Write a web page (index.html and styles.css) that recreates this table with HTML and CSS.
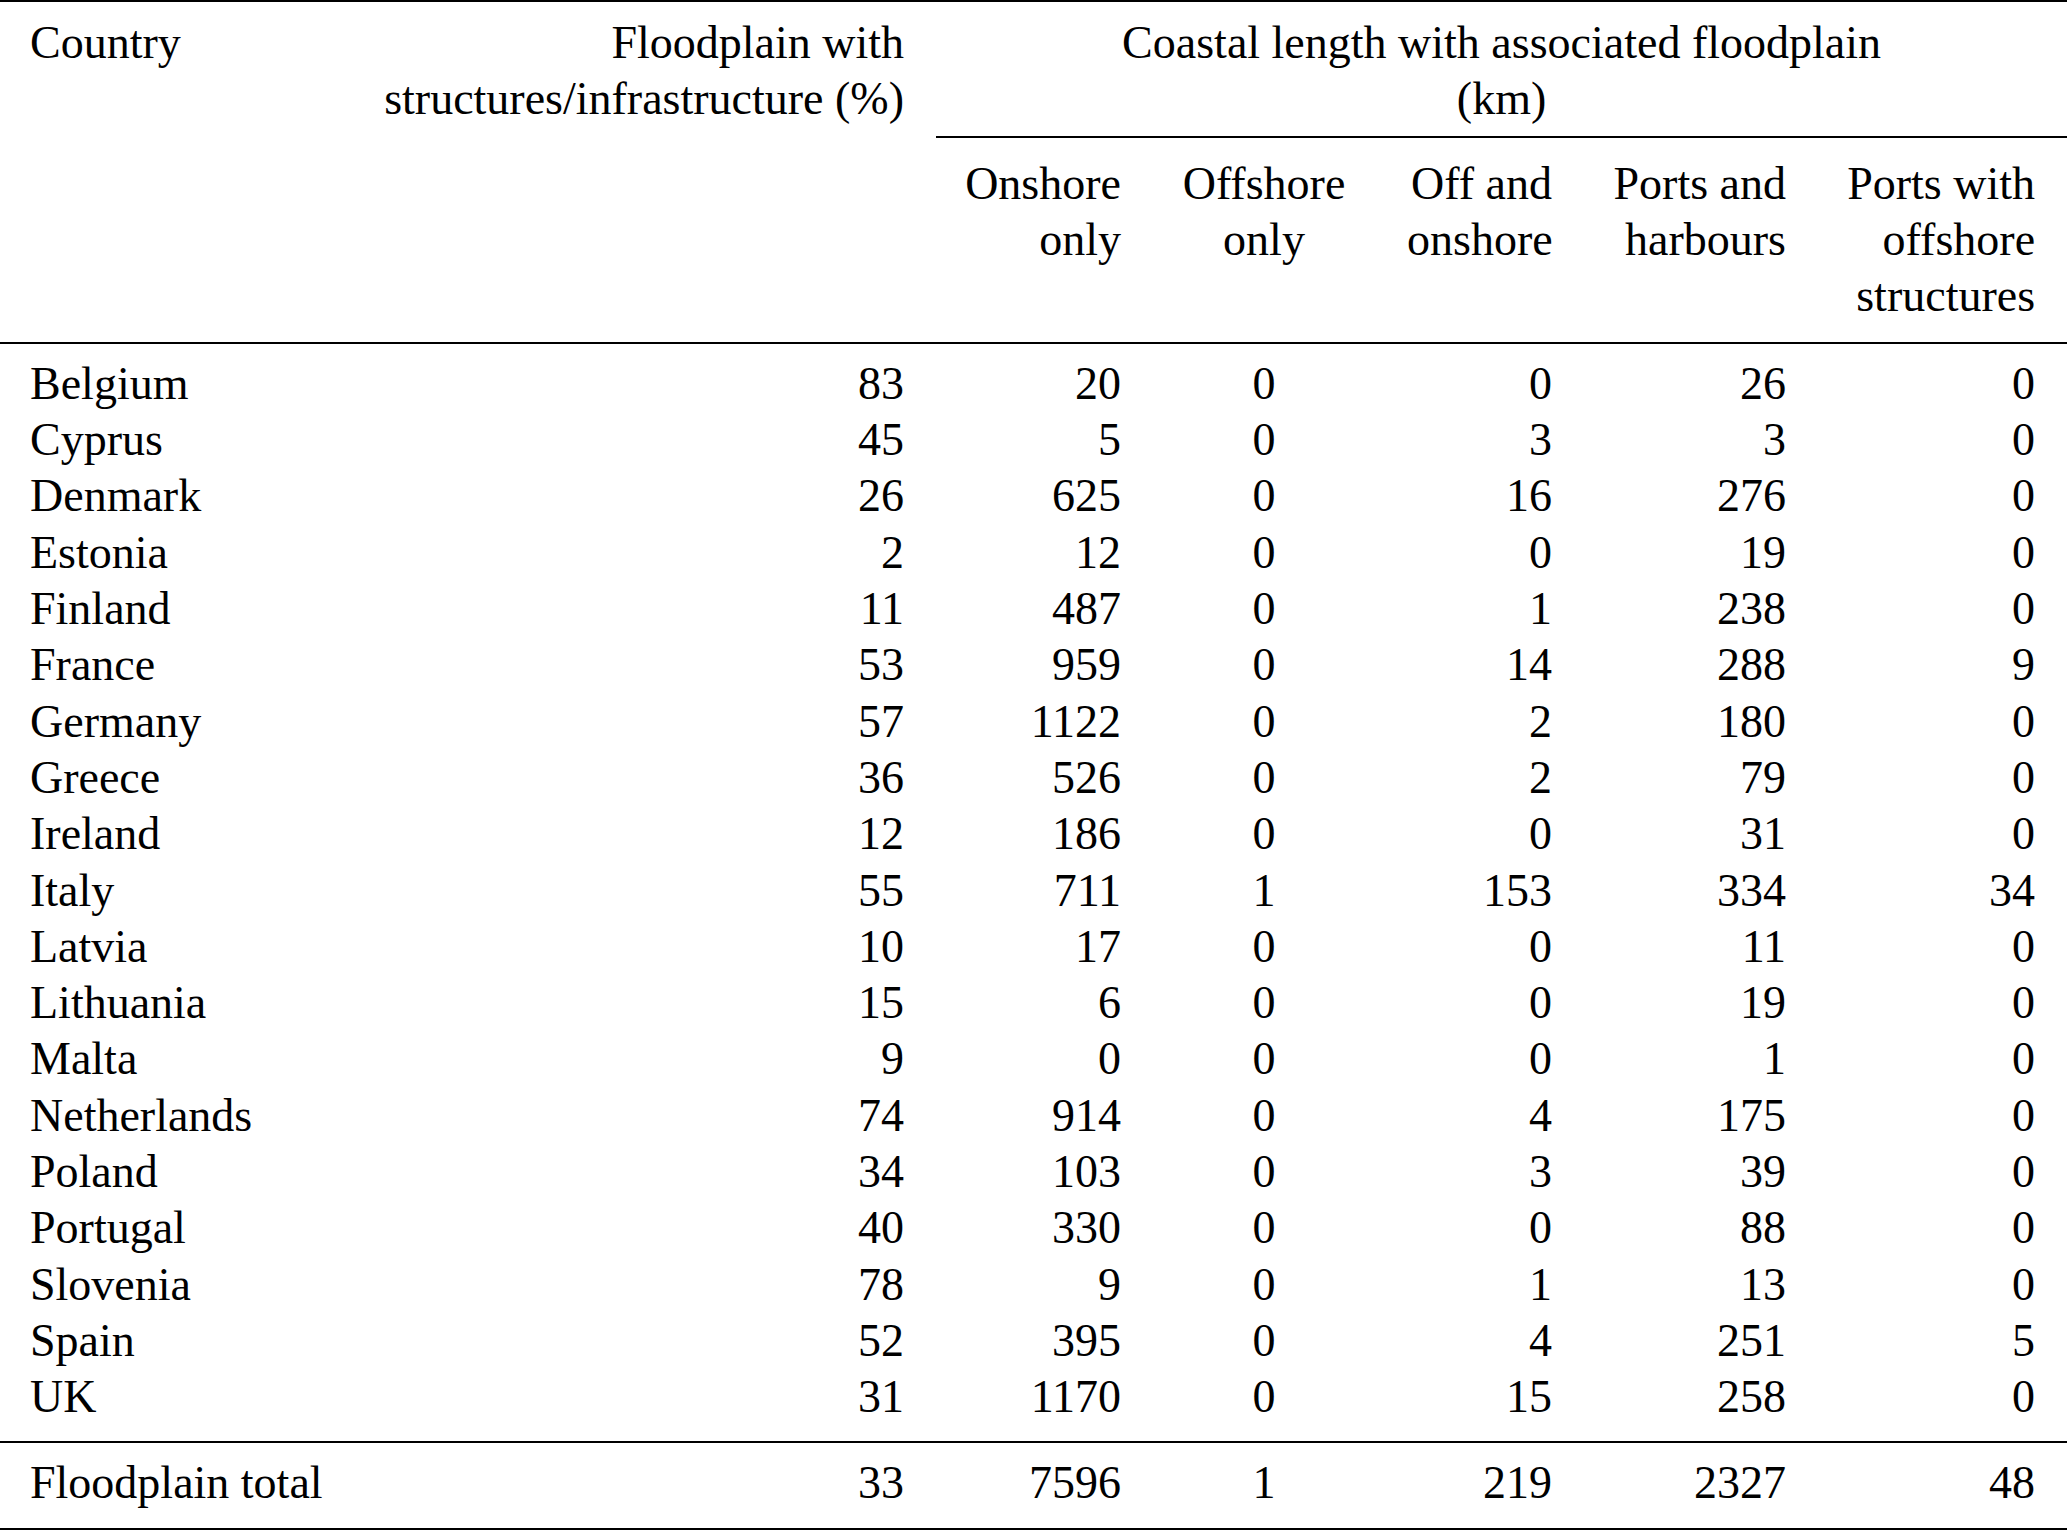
FILE: index.html
```html
<!DOCTYPE html>
<html lang="en">
<head>
<meta charset="utf-8">
<title>Coastal floodplain table</title>
<link rel="stylesheet" href="styles.css">
</head>
<body>
<table class="data">
  <colgroup>
    <col class="c-country">
    <col class="c-pct">
    <col class="c-on">
    <col class="c-off">
    <col class="c-both">
    <col class="c-ports">
    <col class="c-portsoff">
  </colgroup>
  <thead>
    <tr class="h1">
      <th rowspan="2" class="left first">Country</th>
      <th rowspan="2" class="right pct">Floodplain with<br>structures/infrastructure (%)</th>
      <th colspan="5" class="center span">Coastal length with associated floodplain<br>(km)</th>
    </tr>
    <tr class="h2">
      <th class="right">Onshore<br>only</th>
      <th class="center">Offshore<br>only</th>
      <th class="right">Off and<br>onshore</th>
      <th class="right">Ports and<br>harbours</th>
      <th class="right last">Ports with<br>offshore<br>structures</th>
    </tr>
  </thead>
  <tbody>
    <tr><td class="left first">Belgium</td><td class="right pct">83</td><td class="right">20</td><td class="center">0</td><td class="right">0</td><td class="right">26</td><td class="right last">0</td></tr>
    <tr><td class="left first">Cyprus</td><td class="right pct">45</td><td class="right">5</td><td class="center">0</td><td class="right">3</td><td class="right">3</td><td class="right last">0</td></tr>
    <tr><td class="left first">Denmark</td><td class="right pct">26</td><td class="right">625</td><td class="center">0</td><td class="right">16</td><td class="right">276</td><td class="right last">0</td></tr>
    <tr><td class="left first">Estonia</td><td class="right pct">2</td><td class="right">12</td><td class="center">0</td><td class="right">0</td><td class="right">19</td><td class="right last">0</td></tr>
    <tr><td class="left first">Finland</td><td class="right pct">11</td><td class="right">487</td><td class="center">0</td><td class="right">1</td><td class="right">238</td><td class="right last">0</td></tr>
    <tr><td class="left first">France</td><td class="right pct">53</td><td class="right">959</td><td class="center">0</td><td class="right">14</td><td class="right">288</td><td class="right last">9</td></tr>
    <tr><td class="left first">Germany</td><td class="right pct">57</td><td class="right">1122</td><td class="center">0</td><td class="right">2</td><td class="right">180</td><td class="right last">0</td></tr>
    <tr><td class="left first">Greece</td><td class="right pct">36</td><td class="right">526</td><td class="center">0</td><td class="right">2</td><td class="right">79</td><td class="right last">0</td></tr>
    <tr><td class="left first">Ireland</td><td class="right pct">12</td><td class="right">186</td><td class="center">0</td><td class="right">0</td><td class="right">31</td><td class="right last">0</td></tr>
    <tr><td class="left first">Italy</td><td class="right pct">55</td><td class="right">711</td><td class="center">1</td><td class="right">153</td><td class="right">334</td><td class="right last">34</td></tr>
    <tr><td class="left first">Latvia</td><td class="right pct">10</td><td class="right">17</td><td class="center">0</td><td class="right">0</td><td class="right">11</td><td class="right last">0</td></tr>
    <tr><td class="left first">Lithuania</td><td class="right pct">15</td><td class="right">6</td><td class="center">0</td><td class="right">0</td><td class="right">19</td><td class="right last">0</td></tr>
    <tr><td class="left first">Malta</td><td class="right pct">9</td><td class="right">0</td><td class="center">0</td><td class="right">0</td><td class="right">1</td><td class="right last">0</td></tr>
    <tr><td class="left first">Netherlands</td><td class="right pct">74</td><td class="right">914</td><td class="center">0</td><td class="right">4</td><td class="right">175</td><td class="right last">0</td></tr>
    <tr><td class="left first">Poland</td><td class="right pct">34</td><td class="right">103</td><td class="center">0</td><td class="right">3</td><td class="right">39</td><td class="right last">0</td></tr>
    <tr><td class="left first">Portugal</td><td class="right pct">40</td><td class="right">330</td><td class="center">0</td><td class="right">0</td><td class="right">88</td><td class="right last">0</td></tr>
    <tr><td class="left first">Slovenia</td><td class="right pct">78</td><td class="right">9</td><td class="center">0</td><td class="right">1</td><td class="right">13</td><td class="right last">0</td></tr>
    <tr><td class="left first">Spain</td><td class="right pct">52</td><td class="right">395</td><td class="center">0</td><td class="right">4</td><td class="right">251</td><td class="right last">5</td></tr>
    <tr><td class="left first">UK</td><td class="right pct">31</td><td class="right">1170</td><td class="center">0</td><td class="right">15</td><td class="right">258</td><td class="right last">0</td></tr>
  </tbody>
  <tfoot>
    <tr class="total"><td class="left first">Floodplain total</td><td class="right pct">33</td><td class="right">7596</td><td class="center">1</td><td class="right">219</td><td class="right">2327</td><td class="right last">48</td></tr>
  </tfoot>
</table>
</body>
</html>
```
FILE: styles.css
```css
html, body {
  margin: 0;
  padding: 0;
  background: #ffffff;
}

body {
  font-family: "Liberation Serif", "Times New Roman", serif;
  font-size: 46px;
  line-height: 56.3px;
  color: #000000;
}

.data {
  width: 2067px;
  table-layout: fixed;
  border-collapse: separate;
  border-spacing: 0;
}

.c-country { width: 300px; }
.c-pct { width: 636px; }
.c-on { width: 201px; }
.c-off { width: 254px; }
.c-both { width: 177px; }
.c-ports { width: 234px; }
.c-portsoff { width: 265px; }

.data th,
.data td {
  padding: 0 16px;
  font-weight: normal;
  white-space: nowrap;
  vertical-align: top;
}

.data .first { padding-left: 30px; }
.data .pct { padding-right: 32px; }
.data .last { padding-right: 32px; }

.left { text-align: left; }
.right { text-align: right; }
.center { text-align: center; }

/* header row 1 */
.h1 th {
  border-top: 2px solid #000;
  padding-top: 12.8px;
}
.h1 th[rowspan] {
  border-bottom: 2px solid #000;
}
.h1 .span {
  border-bottom: 2px solid #000;
  padding-bottom: 8.9px;
}

/* header row 2 */
.h2 th {
  padding-top: 17.5px;
  padding-bottom: 17px;
  border-bottom: 2px solid #000;
}

/* body */
tbody tr:first-child td { padding-top: 12.2px; }
tbody tr:last-child td { padding-bottom: 15.2px; }

/* total */
.total td {
  border-top: 2px solid #000;
  border-bottom: 2px solid #000;
  padding-top: 12px;
  padding-bottom: 16.8px;
}
```
